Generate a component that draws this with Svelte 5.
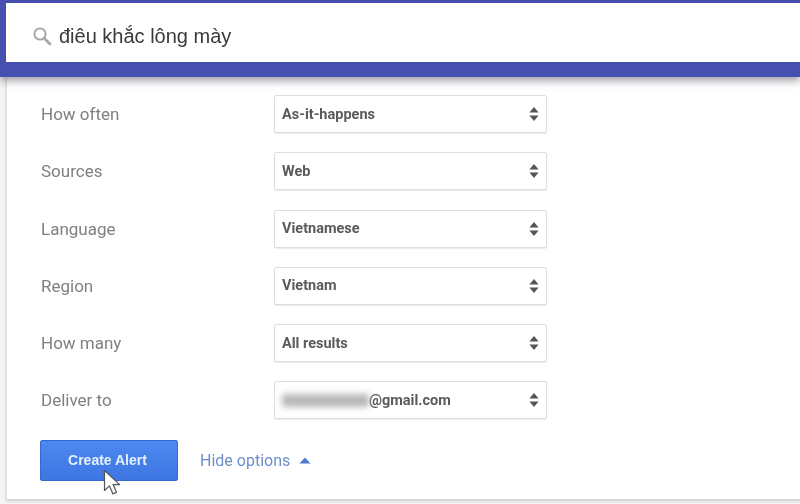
<script>
  const rows = [
    { label: "How often", value: "As-it-happens" },
    { label: "Sources", value: "Web" },
    { label: "Language", value: "Vietnamese" },
    { label: "Region", value: "Vietnam" },
    { label: "How many", value: "All results" },
    { label: "Deliver to", value: "@gmail.com", masked: true }
  ];
</script>

<div class="page">
  <header>
    <div class="search">
      <svg width="20" height="20" viewBox="0 0 20 20" fill="none" aria-hidden="true">
        <circle cx="8" cy="8" r="5.6" stroke="#a9a9a9" stroke-width="2" />
        <path d="M12.2 12.2 18 18" stroke="#a9a9a9" stroke-width="2.8" stroke-linecap="round" />
      </svg>
      <span class="query">điêu khắc lông mày</span>
    </div>
  </header>

  <main>
    <div class="rows">
      {#each rows as row (row.label)}
        <div class="row">
          <span class="label">{row.label}</span>
          <div class="select">
            {#if row.masked}<span class="blur"></span>{/if}
            <span class="value">{row.value}</span>
            <svg class="updown" width="10" height="16" viewBox="0 0 10 16" aria-hidden="true">
              <path d="M5 1 9.6 6.6H.4ZM5 15 .4 9.4h9.2Z" fill="#555" />
            </svg>
          </div>
        </div>
      {/each}
    </div>

    <div class="actions">
      <button>
        Create Alert
        <svg class="cursor" width="20" height="28" viewBox="0 0 20 28" aria-hidden="true">
          <path d="M1.5 1.5v20l5-4.600 3.400 8 3.600-1.600-3.400-7.700h6.600Z" fill="#fff" stroke="#555" stroke-width="1.200" stroke-linejoin="round" />
        </svg>
      </button>
      <span class="toggle">Hide options</span>
      <svg width="12" height="7" viewBox="0 0 12 7" aria-hidden="true">
        <path d="M6 .5 11.500 6.500H.5Z" fill="#4a7bd0" />
      </svg>
    </div>
  </main>
</div>

<style>
  :global(body) {
    margin: 0;
    background: #f5f5f5;
  }
  .page {
    width: 800px;
    height: 504px;
    overflow: hidden;
    font-family: Roboto, "Liberation Sans", sans-serif;
    filter: blur(0.4px);
  }
  header {
    position: relative;
    z-index: 1;
    height: 77px;
    box-sizing: border-box;
    padding: 3px 0 15px 6px;
    background: #4750af;
    box-shadow: 0 4px 8px rgba(40, 30, 50, 0.42);
  }
  .search {
    display: flex;
    align-items: center;
    gap: 7px;
    height: 59px;
    box-sizing: border-box;
    padding: 8px 0 0 26px;
    background: #fff;
  }
  .search svg {
    margin-top: -2px;
  }
  .query {
    font-family: "Liberation Sans", sans-serif;
    font-size: 20px;
    color: #3a3a3a;
  }
  main {
    box-sizing: border-box;
    height: 423px;
    margin-left: 6px;
    padding: 18px 0 0 33px;
    background: #fff;
    border-left: 1px solid #e2e2e2;
    border-bottom: 1px solid #d4d4d4;
    box-shadow: 0 1px 3px rgba(0, 0, 0, 0.18);
  }
  .rows {
    display: flex;
    flex-direction: column;
    gap: 19.300px;
  }
  .row {
    display: flex;
    align-items: center;
    height: 38px;
  }
  .label {
    box-sizing: border-box;
    width: 234px;
    padding-left: 1px;
    font-size: 17px;
    color: #808080;
  }
  .select {
    display: flex;
    align-items: center;
    box-sizing: border-box;
    width: 273px;
    height: 38px;
    padding: 0 6px 0 7px;
    border: 1px solid #dedede;
    border-radius: 2px;
    background: #fff;
    box-shadow: 0 1px 1px rgba(0, 0, 0, 0.08);
  }
  .value {
    font-size: 14.500px;
    font-weight: 700;
    color: #5a5a5a;
  }
  .blur {
    width: 87px;
    height: 13px;
    background: #b8b8b8;
    filter: blur(3px);
  }
  .updown {
    margin-left: auto;
    margin-right: 1px;
  }
  .actions {
    display: flex;
    align-items: center;
    margin-top: 21px;
  }
  button {
    position: relative;
    width: 138px;
    height: 41px;
    margin-right: 22px;
    padding: 0 3px 2px 0;
    border: 1px solid #3768cf;
    border-radius: 2px;
    background: linear-gradient(#4c89f0, #3e76e2);
    color: #e6effc;
    font-family: "Liberation Sans", sans-serif;
    font-size: 14px;
    font-weight: 700;
  }
  .cursor {
    position: absolute;
    left: 61.500px;
    top: 27.500px;
  }
  .toggle {
    margin-right: 9px;
    font-size: 16px;
    color: #6d8fc8;
  }
</style>
